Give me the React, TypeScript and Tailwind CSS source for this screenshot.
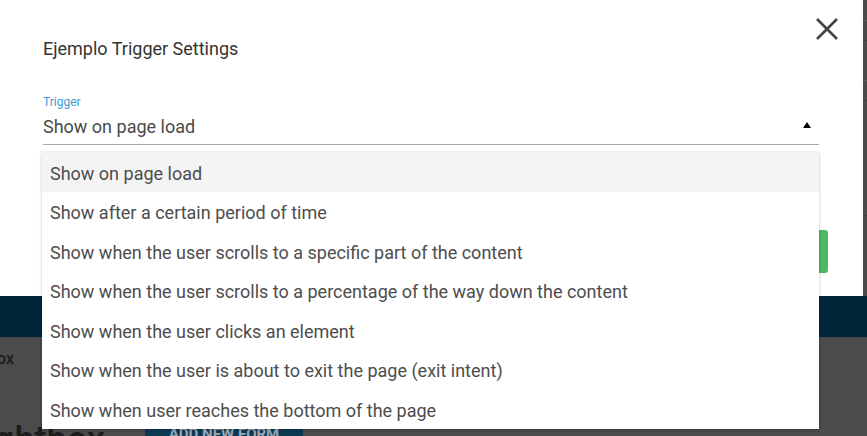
import React from "react";

const items = [
  "Show on page load",
  "Show after a certain period of time",
  "Show when the user scrolls to a specific part of the content",
  "Show when the user scrolls to a percentage of the way down the content",
  "Show when the user clicks an element",
  "Show when the user is about to exit the page (exit intent)",
  "Show when user reaches the bottom of the page",
];

export default function App() {
  return (
    <div
      className="relative w-[867px] h-[436px] overflow-hidden bg-[#4b4b4b]"
      style={{ fontFamily: "Roboto, 'Noto Sans', sans-serif" }}
    >
      {/* background page */}
      <div className="flex flex-col">
        <div className="h-[296px] flex justify-end">
          <div className="w-[4px] h-full bg-[#4a4a4a] flex flex-col">
            <div className="h-[20px]" />
            <div className="h-[1px] bg-[#5a5a5a]" />
            <div className="h-[19px]" />
            <div className="h-[1px] bg-[#3f3f3f]" />
            <div className="h-[39px]" />
            <div className="h-[1px] bg-[#5a5a5a]" />
            <div className="h-[19px]" />
            <div className="h-[1px] bg-[#3f3f3f]" />
            <div className="h-[114px]" />
            <div className="h-[1px] bg-[#3f3f3f]" />
          </div>
        </div>
        <div className="h-[41px] bg-[#00263a]" />
        <div className="h-[99px] bg-[#4b4b4b] flex flex-col">
          <div className="h-[22px] mt-[11px] text-[16px] font-medium leading-[22px] text-[#1c1c1c] -ml-[3px]">
            ox
          </div>
          <div className="flex items-start mt-[52px]">
            <div className="w-[145px] -ml-[6px] text-[36px] leading-[40px] font-medium text-[#1c1c1c] -mt-[2px]">
              ghtbox
            </div>
            <div className="ml-[6px] mt-[2px] w-[158px] h-[20px] bg-[#0c3a55] text-[#9aa9b2] text-[15px] font-bold leading-[20px] text-center">
              ADD NEW FORM
            </div>
          </div>
        </div>
      </div>

      {/* modal */}
      <div className="absolute left-0 top-0 w-[863px] h-[296px] bg-white">
        <div className="pl-[43px] pr-[44px] pt-[37px] flex flex-col">
          <div className="text-[18px] leading-[24px] text-[#333333]">
            Ejemplo Trigger Settings
          </div>
          <div className="mt-[33px] text-[12px] leading-[16px] text-[#3d9ad2]">Trigger</div>
          <div className="flex items-center justify-between h-[35px] border-b border-[#a8a8a8] pb-[1px]">
            <span className="text-[18px] leading-[24px] text-[#4a4a4a]">Show on page load</span>
            <span className="mr-[8px] mb-[3px] w-0 h-0 border-l-[4px] border-r-[4px] border-b-[6px] border-l-transparent border-r-transparent border-b-black" />
          </div>
        </div>
        <div className="absolute left-[740px] top-[230px] w-[88px] h-[43px] rounded-[3px] bg-[#4cb863]" />
        <button className="absolute left-[813px] top-[15px] w-[28px] h-[28px] flex items-center justify-center">
          <svg width="24" height="24" viewBox="0 0 24 24">
            <path d="M2 2 L22 22 M22 2 L2 22" stroke="#444" strokeWidth="2.6" fill="none" />
          </svg>
        </button>
      </div>

      {/* dropdown menu */}
      <div className="absolute left-[42px] top-[152px] w-[777px] bg-white shadow-[0_1px_3px_rgba(0,0,0,0.25)] flex flex-col">
        {items.map((t, i) => (
          <div
            key={t}
            className={`h-[39.5px] flex items-center px-[8px] pt-[3px] text-[18px] text-[#4d4d4d] ${
              i === 0 ? "bg-[#f4f4f4]" : "bg-white"
            }`}
          >
            {t}
          </div>
        ))}
      </div>
    </div>
  );
}
